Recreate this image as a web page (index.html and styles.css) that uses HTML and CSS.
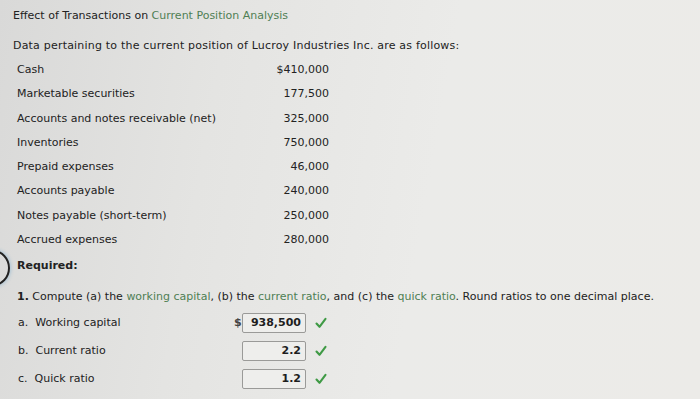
FILE: index.html
```html
<!DOCTYPE html>
<html>
<head>
<meta charset="utf-8">
<link rel="stylesheet" href="styles.css">
</head>
<body>
<div class="page">
  <div class="title">Effect of Transactions on <span class="term">Current Position Analysis</span></div>
  <div class="intro">Data pertaining to the current position of Lucroy Industries Inc. are as follows:</div>
  <div class="data">
    <div class="row"><span>Cash</span><span>$410,000</span></div>
    <div class="row"><span>Marketable securities</span><span>177,500</span></div>
    <div class="row"><span>Accounts and notes receivable (net)</span><span>325,000</span></div>
    <div class="row"><span>Inventories</span><span>750,000</span></div>
    <div class="row"><span>Prepaid expenses</span><span>46,000</span></div>
    <div class="row"><span>Accounts payable</span><span>240,000</span></div>
    <div class="row"><span>Notes payable (short-term)</span><span>250,000</span></div>
    <div class="row"><span>Accrued expenses</span><span>280,000</span></div>
  </div>
  <div class="required">Required:</div>
  <div class="question"><b>1.</b> Compute (a) the <span class="term">working capital</span>, (b) the <span class="term">current ratio</span>, and (c) the <span class="term">quick ratio</span>. Round ratios to one decimal place.</div>
  <div class="answers">
    <div class="arow">
      <span class="alabel">a.&nbsp; Working capital</span>
      <span class="cur">$</span><span class="box">938,500</span>
      <svg class="check" viewBox="0 0 12 12"><path d="M1.5 6.5 L4.5 9.8 L10.5 1.8" fill="none" stroke="#3f9a45" stroke-width="2.1" stroke-linecap="round" stroke-linejoin="round"/></svg>
    </div>
    <div class="arow">
      <span class="alabel">b.&nbsp; Current ratio</span>
      <span class="cur"></span><span class="box">2.2</span>
      <svg class="check" viewBox="0 0 12 12"><path d="M1.5 6.5 L4.5 9.8 L10.5 1.8" fill="none" stroke="#3f9a45" stroke-width="2.1" stroke-linecap="round" stroke-linejoin="round"/></svg>
    </div>
    <div class="arow">
      <span class="alabel">c.&nbsp; Quick ratio</span>
      <span class="cur"></span><span class="box">1.2</span>
      <svg class="check" viewBox="0 0 12 12"><path d="M1.5 6.5 L4.5 9.8 L10.5 1.8" fill="none" stroke="#3f9a45" stroke-width="2.1" stroke-linecap="round" stroke-linejoin="round"/></svg>
    </div>
  </div>
  <div class="bezel"></div>
</div>
</body>
</html>
```
FILE: styles.css
```css
html, body {
  margin: 0;
  padding: 0;
}
body {
  width: 700px;
  height: 399px;
  overflow: hidden;
  background: linear-gradient(100deg, #d9d9d8 0%, #e4e4e2 30%, #ebebe9 60%, #ecebe8 100%);
  font-family: "DejaVu Sans", Verdana, sans-serif;
  font-size: 11px;
  color: #222;
}
.page {
  position: relative;
  height: 399px;
  padding: 9px 0 0 13px;
  box-sizing: border-box;
}
.term {
  color: #4f7f54;
}
.title {
  line-height: 14px;
}
.intro {
  margin-top: 16px;
  line-height: 14px;
  letter-spacing: 0.2px;
}
.data {
  margin-top: 10px;
  margin-left: 4px;
  width: 312px;
}
.row {
  display: flex;
  justify-content: space-between;
  height: 24.3px;
  line-height: 14px;
}
.required {
  margin-left: 4px;
  margin-top: 2px;
  font-weight: bold;
  line-height: 14px;
}
.question {
  margin-left: 4px;
  margin-top: 17px;
  line-height: 14px;
}
.answers {
  margin-top: 8px;
  margin-left: 4px;
  display: flex;
  flex-direction: column;
  gap: 7px;
}
.arow {
  display: flex;
  align-items: center;
  height: 21px;
}
.alabel {
  width: 216px;
  padding-left: 1px;
}
.cur {
  width: 8px;
  font-weight: bold;
  color: #444;
}
.box {
  box-sizing: border-box;
  width: 64px;
  height: 20px;
  border: 1px solid #9a9a98;
  border-radius: 2px;
  background: #eeeeec;
  text-align: right;
  padding-right: 4px;
  line-height: 18px;
  font-weight: bold;
  color: #1e1e1e;
}
.check {
  width: 12px;
  height: 12px;
  margin-left: 9px;
}
.bezel {
  position: absolute;
  left: -24px;
  top: 250px;
  width: 30px;
  height: 32px;
  border: 2.5px solid #222;
  border-radius: 50%;
  box-shadow: 0 0 4px #8ab4d0;
}
```
